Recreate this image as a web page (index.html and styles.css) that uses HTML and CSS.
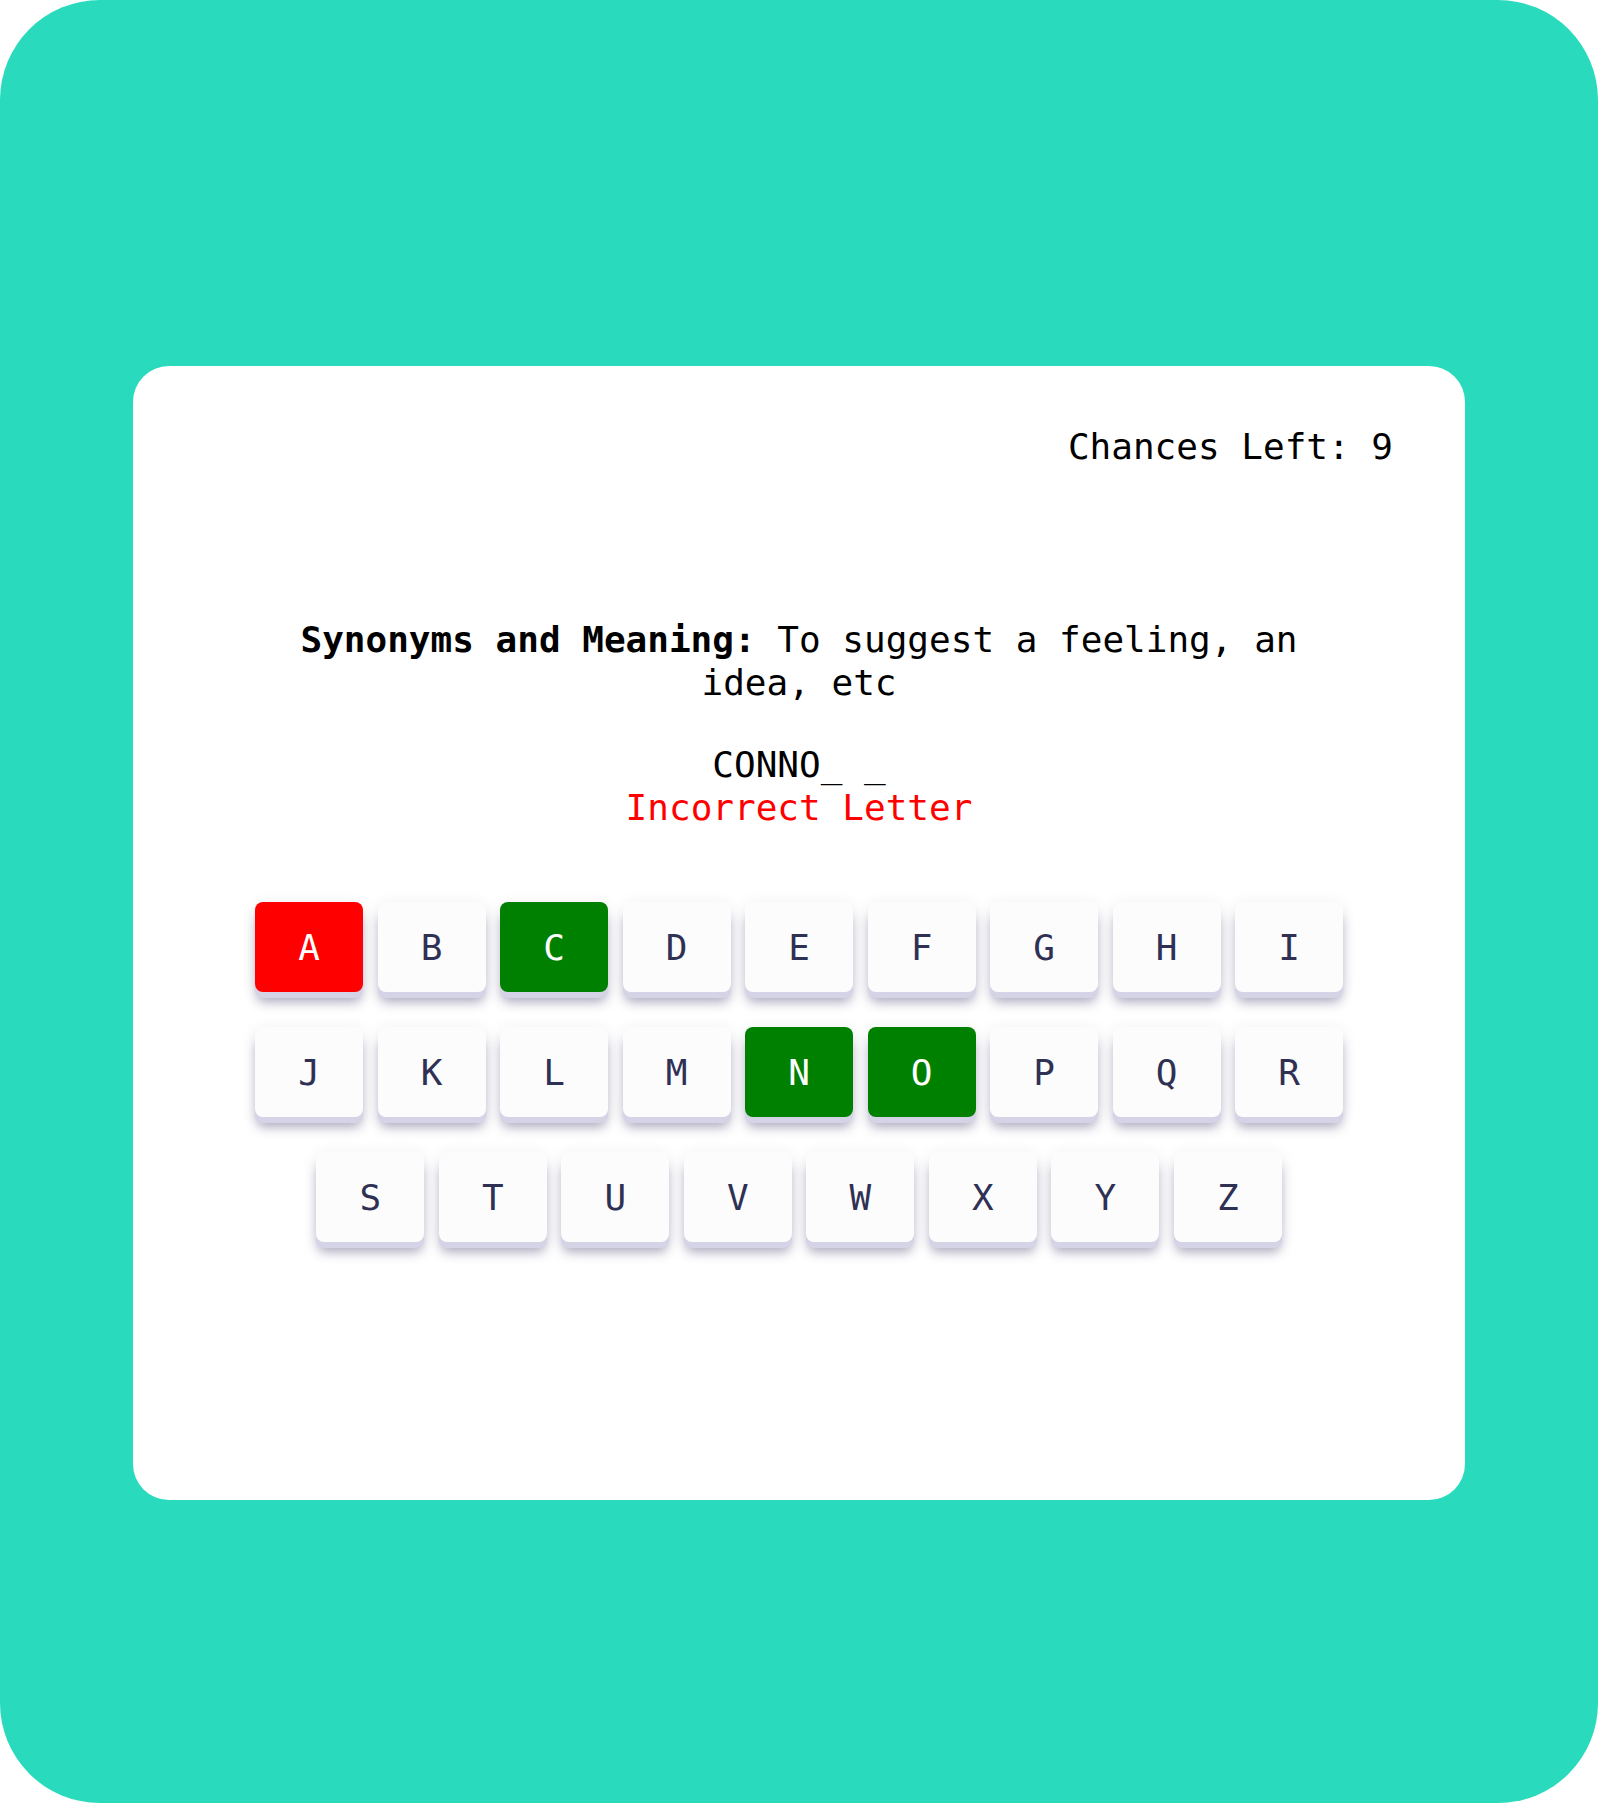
FILE: index.html
```html
<!DOCTYPE html>
<html lang="en">
<head>
<meta charset="utf-8">
<title>Hangman</title>
<link rel="stylesheet" href="styles.css">
</head>
<body>
<div class="stage">
  <main class="card">
    <div class="chances">Chances Left: 9</div>
    <p class="hint"><b>Synonyms and Meaning:</b> To suggest a feeling, an idea, etc</p>
    <div class="word">CONNO_ _</div>
    <div class="status">Incorrect Letter</div>
    <div class="keyboard">
      <div class="row">
        <button class="key wrong">A</button>
        <button class="key">B</button>
        <button class="key right">C</button>
        <button class="key">D</button>
        <button class="key">E</button>
        <button class="key">F</button>
        <button class="key">G</button>
        <button class="key">H</button>
        <button class="key">I</button>
      </div>
      <div class="row">
        <button class="key">J</button>
        <button class="key">K</button>
        <button class="key">L</button>
        <button class="key">M</button>
        <button class="key right">N</button>
        <button class="key right">O</button>
        <button class="key">P</button>
        <button class="key">Q</button>
        <button class="key">R</button>
      </div>
      <div class="row">
        <button class="key">S</button>
        <button class="key">T</button>
        <button class="key">U</button>
        <button class="key">V</button>
        <button class="key">W</button>
        <button class="key">X</button>
        <button class="key">Y</button>
        <button class="key">Z</button>
      </div>
    </div>
  </main>
</div>
</body>
</html>
```
FILE: styles.css
```css
* { box-sizing: border-box; }
html, body { margin: 0; padding: 0; background: #ffffff; }
body {
  font-family: "DejaVu Sans Mono", "Liberation Mono", monospace;
  color: #000;
}
.stage {
  width: 1598px;
  height: 1803px;
  background: #29dbbc;
  border-radius: 100px;
  padding-top: 366px;
}
.card {
  width: 1332px;
  height: 1134px;
  margin: 0 auto;
  background: #ffffff;
  border-radius: 36px;
  padding: 60px 72px 0;
  display: flex;
  flex-direction: column;
  align-items: center;
}
.chances {
  align-self: stretch;
  text-align: right;
  font-size: 36px;
  line-height: 42px;
}
.hint {
  margin: 150px 0 0;
  max-width: 1050px;
  text-align: center;
  font-size: 36px;
  line-height: 43px;
}
.hint b { font-weight: bold; }
.word {
  margin-top: 39px;
  font-size: 36px;
  line-height: 43px;
}
.status {
  font-size: 36px;
  line-height: 43px;
  color: #ff0000;
}
.keyboard {
  margin-top: 73px;
  display: flex;
  flex-direction: column;
  align-items: center;
  gap: 35px;
}
.row {
  display: flex;
  gap: 14.5px;
}
.key {
  width: 108px;
  height: 90px;
  border: none;
  border-radius: 8px;
  background: #fcfcfd;
  color: #2f3154;
  font-family: "DejaVu Sans Mono", monospace;
  font-size: 36px;
  padding: 0;
  display: flex;
  align-items: center;
  justify-content: center;
  box-shadow: 0 6px 0 #d5d3e6, 0 12px 12px -2px rgba(60, 50, 100, 0.4), 0 2px 16px rgba(40, 30, 80, 0.08);
}
.key.wrong { background: #ff0000; color: #ffffff; }
.key.right { background: #008000; color: #ffffff; }
```
